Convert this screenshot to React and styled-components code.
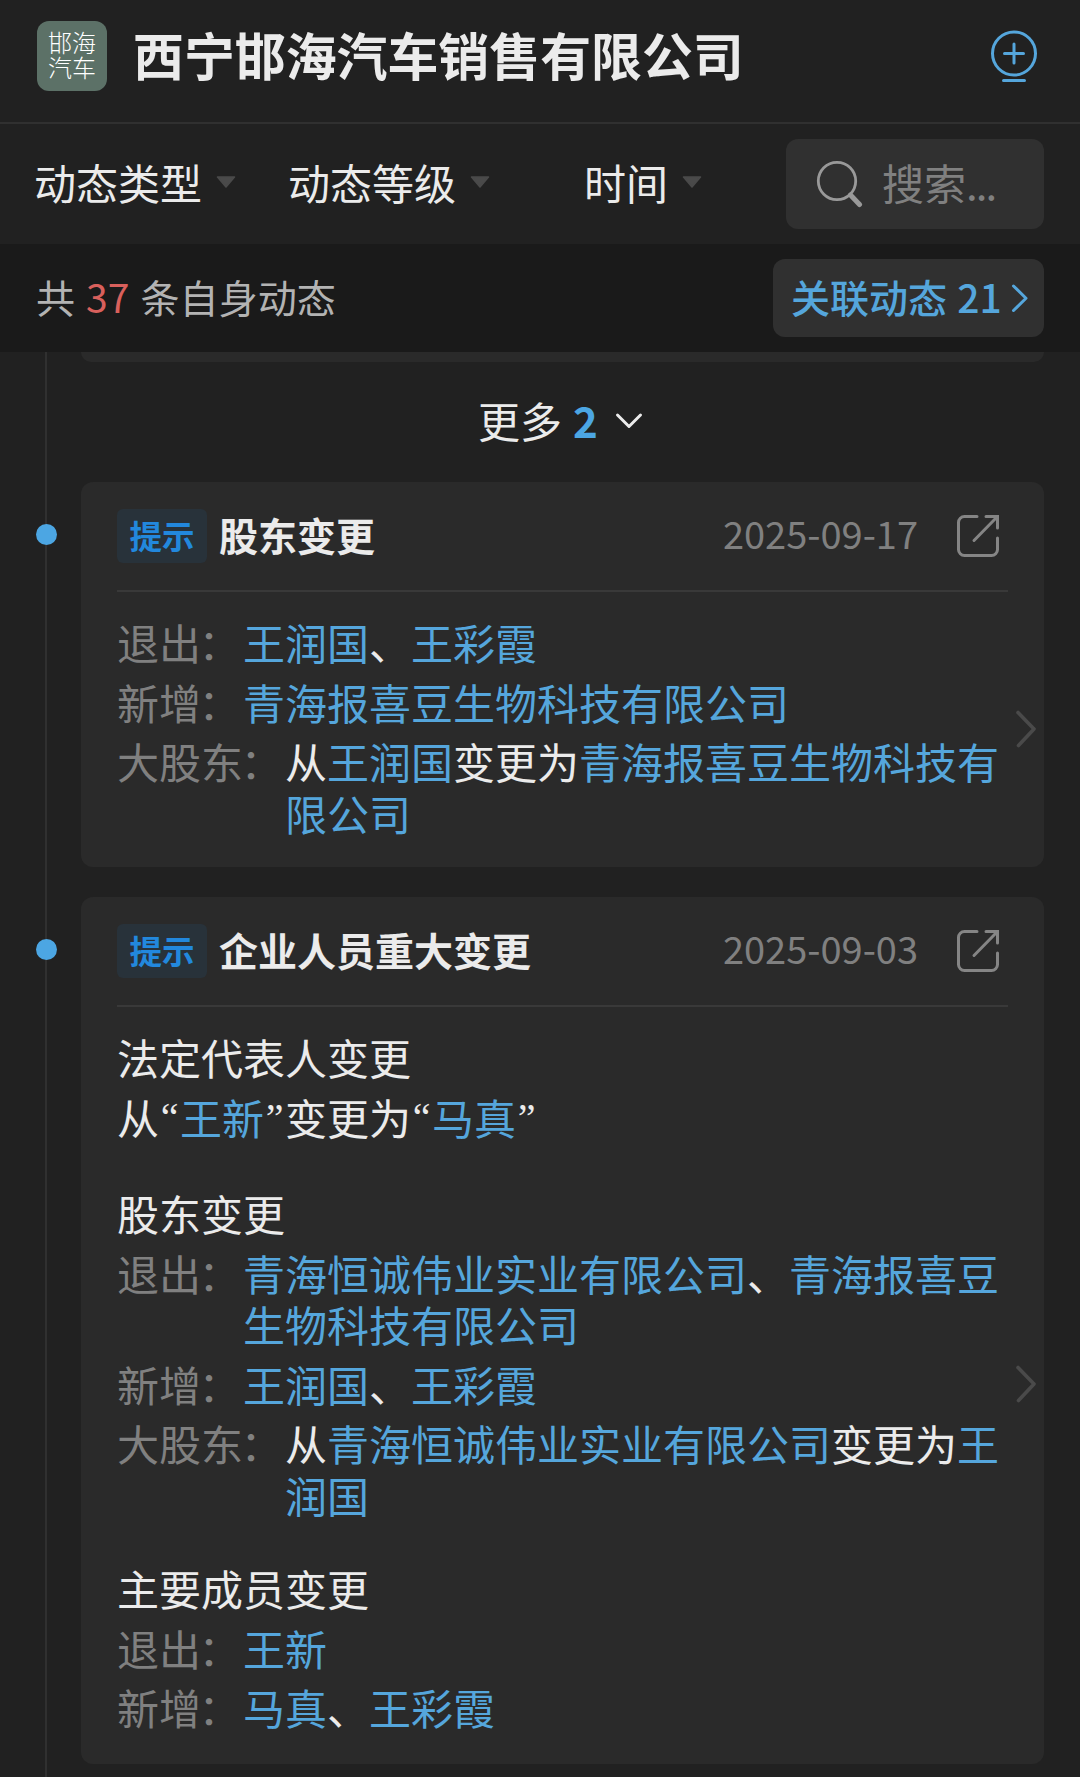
import styled, { createGlobalStyle } from 'styled-components';

const GlobalStyle = createGlobalStyle`
  * {
    box-sizing: border-box;
  }
  body {
    margin: 0;
    background-color: #212121;
    color: #ebebeb;
    font-family: 'Noto Sans CJK SC', 'Noto Sans', sans-serif;
    overflow: hidden;
  }
`;

const Page = styled.div`
  display: flex;
  flex-direction: column;
  width: 1080px;
  height: 1777px;
  overflow: hidden;
  background-color: #212121;
`;

const Header = styled.header`
  display: flex;
  align-items: center;
  flex: none;
  height: 124px;
  padding: 0 41px 10px 37px;
  border-bottom: 2px solid #303030;
`;

const Logo = styled.div`
  display: flex;
  flex-direction: column;
  justify-content: center;
  align-items: center;
  width: 70px;
  height: 70px;
  border-radius: 12px;
  background-color: #5c7167;
  color: #fff;
  font-size: 24px;
  font-weight: 300;
  line-height: 25px;
  padding-bottom: 5px;
`;

const Company = styled.h1`
  flex: 1;
  margin: 0 0 0 26px;
  font-size: 50.9px;
  font-weight: 700;
  line-height: 60px;
  padding-bottom: 4px;
`;

const FilterBar = styled.div`
  display: flex;
  align-items: center;
  justify-content: space-between;
  flex: none;
  height: 120px;
  padding: 0 36px 0 8px;
`;

const Filters = styled.div`
  display: grid;
  grid-template-columns: repeat(3, 254px);
`;

const Filter = styled.div`
  display: flex;
  justify-content: center;
  align-items: center;
  gap: 14px;
  font-size: 42px;
  line-height: 60px;
  padding-bottom: 4px;
`;

const SearchBox = styled.div`
  display: flex;
  align-items: center;
  gap: 18px;
  width: 258px;
  height: 90px;
  padding: 0 0 0 30px;
  border-radius: 12px;
  background-color: #303030;
  color: #808080;
  font-size: 42px;
`;

const SearchText = styled.span`
  line-height: 60px;
  padding-bottom: 4px;
`;

const Dots = styled.span`
  letter-spacing: -1.9px;
`;

const Summary = styled.div`
  display: flex;
  align-items: center;
  justify-content: space-between;
  flex: none;
  height: 108px;
  padding: 0 36px;
  background-color: #1a1a1a;
  color: #b3b3b3;
  font-size: 39.1px;
`;

const SummaryText = styled.div`
  line-height: 60px;
  padding-bottom: 4px;
`;

const Count = styled.span`
  margin: 0 11px;
  color: #d9605c;
`;

const RelatedButton = styled.div`
  display: flex;
  align-items: center;
  justify-content: space-between;
  width: 271px;
  height: 78px;
  padding: 0 16px 0 18px;
  border-radius: 12px;
  background-color: #303030;
  color: #55a6dc;
  font-size: 39px;
  font-weight: 500;
  word-spacing: 1.5px;
`;

const Timeline = styled.main`
  flex: 1;
  margin-left: 45px;
  padding: 0 36px 0 34px;
  border-left: 2px solid #303030;
`;

const CardEnd = styled.div`
  height: 10px;
  border-radius: 0 0 12px 12px;
  background-color: #2a2a2a;
`;

const More = styled.div`
  display: flex;
  align-items: center;
  justify-content: center;
  height: 120px;
  padding: 0 4px 5px 0;
  font-size: 42px;
`;

const MoreCount = styled.span`
  margin: 0 17px 0 11px;
  color: #4ca6e3;
  font-weight: 700;
`;

const Card = styled.section`
  position: relative;
  margin-bottom: 30px;
  padding-left: 36px;
  border-radius: 12px;
  background-color: #2a2a2a;
`;

const Dot = styled.span`
  position: absolute;
  left: -45px;
  top: 42px;
  width: 21px;
  height: 21px;
  border-radius: 50%;
  background-color: #4ca6e3;
`;

const CardHeader = styled.div`
  display: flex;
  align-items: center;
  width: 891px;
  height: 110px;
  padding-right: 8px;
  border-bottom: 2px solid #393939;
`;

const Badge = styled.span`
  width: 90px;
  height: 54px;
  border-radius: 6px;
  background-color: #28323a;
  color: #2288dd;
  font-size: 32.5px;
  font-weight: 700;
  line-height: 51px;
  text-align: center;
`;

const CardTitle = styled.h2`
  flex: 1;
  margin: 0 0 0 12px;
  padding-bottom: 4px;
  font-size: 39px;
  font-weight: 700;
  line-height: 52px;
`;

const CardDate = styled.span`
  margin-right: 38px;
  padding-bottom: 6px;
  color: #808080;
  font-size: 38px;
  line-height: 52px;
`;

const CardBody = styled.div`
  display: flex;
  align-items: center;
  gap: 7px;
`;

const Groups = styled.div`
  display: flex;
  flex-direction: column;
  gap: 45px;
  width: 891px;
  padding: 28px 0 25px;
`;

const Group = styled.div`
  display: flex;
  flex-direction: column;
  gap: 8px;
  font-family: 'Liberation Sans', 'Noto Sans CJK SC', sans-serif;
  font-size: 42px;
  line-height: 51.5px;

  &:nth-child(3) {
    margin: -3px 0 2px;
  }
`;

const Row = styled.div`
  display: flex;
`;

const Label = styled.span`
  flex: none;
  color: #808080;
`;

const Colon = styled.span`
  display: inline-block;
  width: 42px;
  text-indent: -2.5px;
`;

const Value = styled.span`
  flex: 1;
  word-break: break-all;
`;

const Link = styled.a`
  color: #55a6dc;
`;

const Quote = styled.span`
  width: 21px;
  font-family: 'Liberation Serif', serif;
  font-size: 40px;
  line-height: 46px;
  text-align: center;
`;

function Caret() {
  return (
    <svg width="20" height="12" viewBox="0 0 20 12">
      <path d="M1.5 1h17L10 11z" fill="#4a4a4a" stroke="#4a4a4a" strokeWidth="1.5" strokeLinejoin="round" />
    </svg>
  );
}

function FollowIcon() {
  return (
    <svg width="50" height="54" viewBox="0 0 50 54" fill="none" stroke="#55a6dc" strokeWidth="3" strokeLinecap="round">
      <circle cx="25" cy="24.5" r="21.5" />
      <path d="M25 15v19M15.5 24.5h19M14.5 51.5h21" />
    </svg>
  );
}

function SearchIcon() {
  return (
    <svg width="48" height="48" viewBox="0 0 48 48" fill="none" stroke="#999" strokeLinecap="round">
      <circle cx="21" cy="21" r="18.7" strokeWidth="2.8" />
      <path d="M34.5 35l9 9.5" strokeWidth="5" />
    </svg>
  );
}

function ShareIcon() {
  return (
    <svg width="44" height="44" viewBox="0 0 44 44" fill="none" stroke="#858585" strokeWidth="3" strokeLinecap="round">
      <path d="M21 2.5H8.5a6 6 0 0 0-6 6v27a6 6 0 0 0 6 6h27a6 6 0 0 0 6-6V24" />
      <path d="M30 2.5h11.5V14M41 3L18 26.5" />
    </svg>
  );
}

function Related({ children }) {
  return (
    <RelatedButton>
      <SummaryText>{children}</SummaryText>
      <svg width="17" height="30" viewBox="0 0 17 30" fill="none" stroke="#55a6dc" strokeWidth="3" strokeLinecap="round" strokeLinejoin="round">
        <path d="M2.5 3L15 15.3 2.5 27.5" />
      </svg>
    </RelatedButton>
  );
}

function Names({ list }) {
  return list.map((name, i) => (
    <span key={name}>
      {i > 0 && '、'}
      <Link>{name}</Link>
    </span>
  ));
}

function Field({ label, children }) {
  return (
    <Row>
      <Label>{label}<Colon>：</Colon></Label>
      <Value>{children}</Value>
    </Row>
  );
}

function EventCard({ title, date, children }) {
  return (
    <Card>
      <Dot />
      <CardHeader>
        <Badge>提示</Badge>
        <CardTitle>{title}</CardTitle>
        <CardDate>{date}</CardDate>
        <ShareIcon />
      </CardHeader>
      <CardBody>
        <Groups>{children}</Groups>
        <svg width="22" height="40" viewBox="0 0 22 40" fill="none" stroke="#4a4a4a" strokeWidth="3.6" strokeLinecap="round" strokeLinejoin="round">
          <path d="M3 2.5L19 19 3.5 35.5" />
        </svg>
      </CardBody>
    </Card>
  );
}

export default function App() {
  return (
    <Page>
      <GlobalStyle />
      <Header>
        <Logo>
          <span>邯海</span>
          <span>汽车</span>
        </Logo>
        <Company>西宁邯海汽车销售有限公司</Company>
        <FollowIcon />
      </Header>
      <FilterBar>
        <Filters>
          <Filter>动态类型<Caret /></Filter>
          <Filter>动态等级<Caret /></Filter>
          <Filter>时间<Caret /></Filter>
        </Filters>
        <SearchBox>
          <SearchIcon />
          <SearchText>搜索<Dots>...</Dots></SearchText>
        </SearchBox>
      </FilterBar>
      <Summary>
        <SummaryText>
          共<Count>37</Count>条自身动态
        </SummaryText>
        <Related>关联动态 21</Related>
      </Summary>
      <Timeline>
        <CardEnd />
        <More>
          更多
          <MoreCount>2</MoreCount>
          <svg width="28" height="18" viewBox="0 0 28 18" fill="none" stroke="#ebebeb" strokeWidth="3" strokeLinecap="round" strokeLinejoin="round">
            <path d="M2.5 4L14 15.5 25.5 4" />
          </svg>
        </More>
        <EventCard title="股东变更" date="2025-09-17">
          <Group>
            <Field label="退出"><Names list={['王润国', '王彩霞']} /></Field>
            <Field label="新增"><Link>青海报喜豆生物科技有限公司</Link></Field>
            <Field label="大股东">
              从<Link>王润国</Link>变更为<Link>青海报喜豆生物科技有限公司</Link>
            </Field>
          </Group>
        </EventCard>
        <EventCard title="企业人员重大变更" date="2025-09-03">
          <Group>
            <Row>法定代表人变更</Row>
            <Row>
              从<Quote>“</Quote><Link>王新</Link><Quote>”</Quote>变更为<Quote>“</Quote><Link>马真</Link><Quote>”</Quote>
            </Row>
          </Group>
          <Group>
            <Row>股东变更</Row>
            <Field label="退出"><Names list={['青海恒诚伟业实业有限公司', '青海报喜豆生物科技有限公司']} /></Field>
            <Field label="新增"><Names list={['王润国', '王彩霞']} /></Field>
            <Field label="大股东">
              从<Link>青海恒诚伟业实业有限公司</Link>变更为<Link>王润国</Link>
            </Field>
          </Group>
          <Group>
            <Row>主要成员变更</Row>
            <Field label="退出"><Names list={['王新']} /></Field>
            <Field label="新增"><Names list={['马真', '王彩霞']} /></Field>
          </Group>
        </EventCard>
      </Timeline>
    </Page>
  );
}
